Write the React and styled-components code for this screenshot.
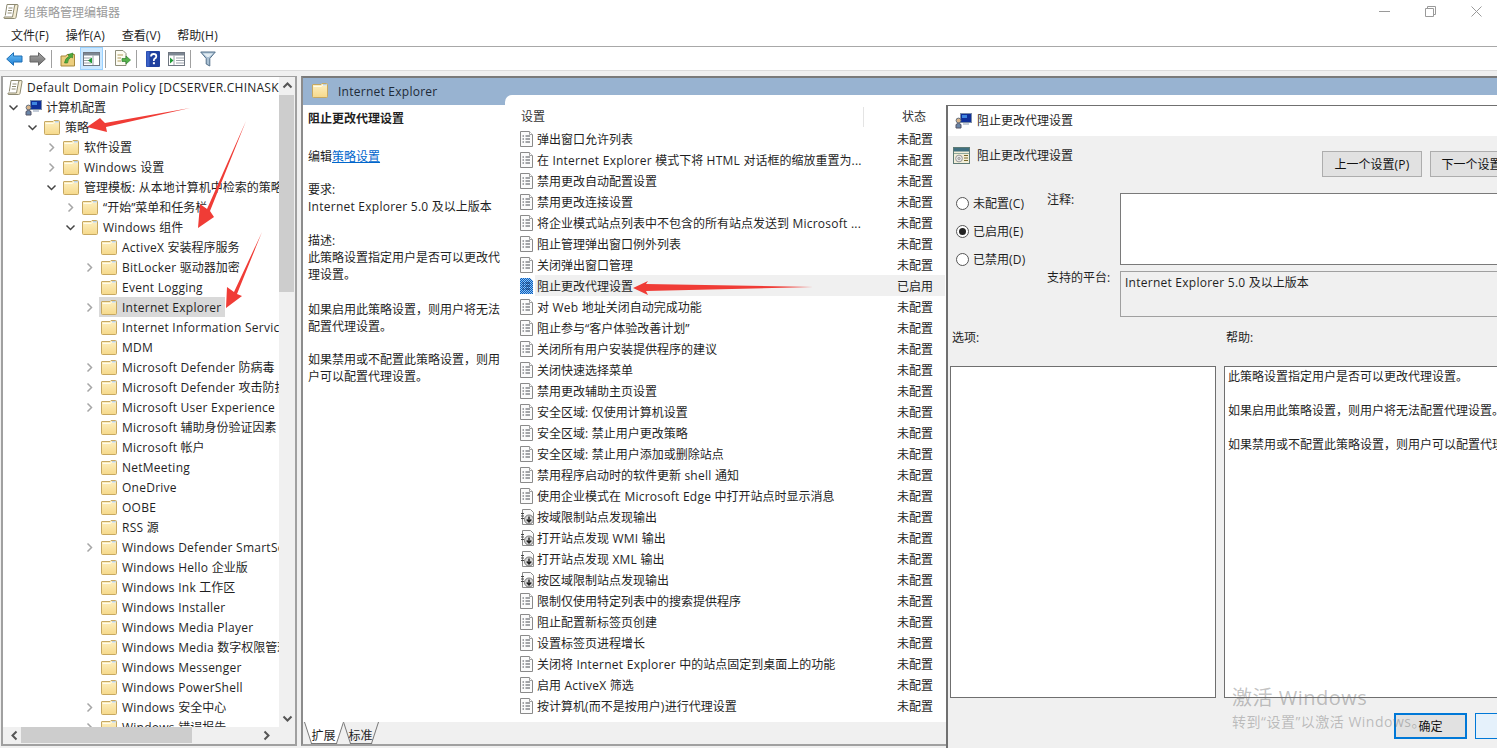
import React from 'react'
import styled, { createGlobalStyle } from 'styled-components'

const GlobalStyle = createGlobalStyle`
    html, body {
        margin: 0;
        padding: 0;
        background: #f0f0f0;
    }
    body {
        font-family: "Open Sans", "Noto Sans CJK SC", sans-serif;
        font-size: 12px;
        color: #1f1f1f;
    }
`

const Latin = styled.span`
    letter-spacing: 0.25px;
`

// Segoe UI runs a little wider than Open Sans, CJK stays at 12px
const Mixed = ({ children }) =>
    <>
        {children.split(/([A-Za-z0-9.()[\]: -]+)/).map((part, i) =>
            i % 2 ? <Latin key={i}>{part}</Latin> : part)}
    </>

const Window = styled.div`
    position: relative;
    width: 1497px;
    height: 748px;
    overflow: hidden;
    display: flex;
    flex-direction: column;
    background: #f0f0f0;
`

const TitleBar = styled.div`
    height: 23px;
    display: flex;
    align-items: center;
    padding-left: 3px;
    background: #fff;
    color: #9a9a9a;
    gap: 5px;
`
const TitleControls = styled.div`
    margin-left: auto;
    display: flex;
    gap: 35px;
    padding-right: 15px;
    align-items: center;
`
const MenuBar = styled.div`
    height: 24px;
    box-sizing: border-box;
    display: flex;
    align-items: center;
    gap: 16.6px;
    padding-left: 11px;
    background: #fff;
    border-bottom: 1px solid #a8a8a8;
`
const Toolbar = styled.div`
    height: 24px;
    box-sizing: border-box;
    display: flex;
    align-items: center;
    padding-left: 6px;
    background: #fff;
    border-bottom: 1px solid #dcdcdc;
`
const ToolButton = styled.div`
    width: ${({ w }) => w || 17}px;
    height: 23px;
    flex: none;
    margin-left: ${({ ml }) => ml || 0}px;
    display: flex;
    align-items: center;
    justify-content: center;
    box-sizing: border-box;
    ${({ pressed }) => pressed && 'background: #cce8ff; border: 1px solid #99d1ff;'}
`
const ToolSep = styled.div`
    width: 1px;
    height: 18px;
    flex: none;
    background: #a0a0a0;
    margin-left: ${({ ml }) => ml || 5}px;
`

const Workspace = styled.div`
    flex: 1;
    min-height: 0;
    display: flex;
    gap: 4px;
    padding: 5px 0 2px 1px;
`

const TreePanel = styled.div`
    width: 296px;
    box-sizing: border-box;
    border: 2px solid #a0a0a0;
    border-top-width: 1px;
    display: grid;
    grid-template-columns: 1fr 16px;
    grid-template-rows: 1fr 17px;
    background: #f0f0f0;
`
const Tree = styled.div`
    background: #fff;
    overflow: hidden;
    min-width: 0;
`
const TreeRow = styled.div`
    height: 20px;
    display: flex;
    align-items: center;
    white-space: nowrap;
    padding-left: ${({ depth }) => depth * 19 + 4}px;
`
const Twist = styled.span`
    width: 13px;
    height: 20px;
    flex: none;
    display: flex;
    align-items: center;
    justify-content: center;
    margin-right: 3px;
`
const TreeLabel = styled.span`
    display: flex;
    align-items: center;
    height: 20px;
    padding: 0 4px 0 ${({ root }) => (root ? 0 : 2)}px;
    gap: 4px;
    background: ${({ selected }) => (selected ? '#d9d9d9' : 'transparent')};
`
const VScroll = styled.div`
    display: flex;
    flex-direction: column;
    align-items: center;
    justify-content: space-between;
    padding: 3px 0;
    position: relative;
`
const VThumb = styled.div`
    position: absolute;
    top: 18px;
    left: 0;
    right: 1px;
    height: 197px;
    background: #cdcdcd;
`
const HScroll = styled.div`
    grid-column: 1 / span 2;
    position: relative;
    display: flex;
    align-items: center;
    justify-content: space-between;
    padding: 0 23px 0 6px;
`
const HThumb = styled.div`
    position: absolute;
    top: 0;
    bottom: 1px;
    left: 18px;
    width: 171px;
    background: #cdcdcd;
`

const DetailPanel = styled.div`
    flex: 1;
    min-width: 0;
    display: flex;
    flex-direction: column;
    border-left: 2px solid #8c8c8c;
    border-top: 2px solid #7a7a7a;
    border-bottom: 2px solid #a0a0a0;
`
const PaneHead = styled.div`
    height: 27px;
    box-sizing: border-box;
    flex: none;
    background: #98b3d1;
    display: flex;
    align-items: flex-start;
    padding: 5px 0 0 9px;
    gap: 9px;
    line-height: 17px;
    color: #1d2a38;
`
const PaneBody = styled.div`
    flex: 1;
    min-height: 0;
    display: flex;
    background: #fff;
`
const Description = styled.div`
    width: 202px;
    flex: none;
    box-sizing: border-box;
    padding: 5px 0 0 5px;
    line-height: 17px;
`
const DescTitle = styled.div`
    font-weight: 700;
    margin-bottom: 21px;
`
const DescBlock = styled.div`
    margin-bottom: ${({ gap }) => gap ?? 17}px;
    width: 196px;
`
const PolicyLink = styled.a`
    color: #0066cc;
    text-decoration: underline;
`
const PolicyList = styled.div`
    flex: 1;
    min-width: 0;
    margin-top: -10px;
    background: #fff;
    border-top-left-radius: 7px;
`
const ListHead = styled.div`
    height: 33px;
    display: grid;
    grid-template-columns: 359px 1fr;
    box-sizing: border-box;
    padding-top: 12px;
    color: #333;
`
const ColName = styled.span`
    padding-left: 16px;
    border-right: 1px solid #e4e4e4;
    height: 20px;
    line-height: 20px;
`
const ColState = styled.span`
    padding-left: 38px;
    line-height: 18px;
    margin-top: 1px;
`
const PolicyRow = styled.div`
    width: 440px;
    height: 21px;
    box-sizing: border-box;
    display: flex;
    align-items: center;
    padding-left: 15px;
    white-space: nowrap;
`
const IconSlot = styled.span`
    width: 13px;
    flex: none;
    display: flex;
    margin-right: 2px;
`
const RowBody = styled.div`
    flex: 1;
    height: 21px;
    display: grid;
    grid-template-columns: 360px 1fr;
    align-items: center;
    padding-left: 2px;
    background: ${({ active }) => (active ? '#f0f0f0' : 'transparent')};
`
const TabStrip = styled.div`
    height: 22px;
    flex: none;
    display: flex;
    background: #f0f0f0;
    padding-left: 1px;
`
const Tab = styled.div`
    position: relative;
    width: ${({ active }) => (active ? 39 : 35)}px;
    height: 22px;
    box-sizing: border-box;
    padding-top: 3px;
    display: flex;
    align-items: center;
    justify-content: center;
    z-index: ${({ active }) => (active ? 2 : 1)};
    &::before, &::after {
        content: "";
        position: absolute;
        top: 0;
        bottom: 0;
        width: 50%;
        border-bottom: 1px solid #777;
        background: ${({ active }) => (active ? '#fff' : '#f0f0f0')};
        z-index: -1;
    }
    &::before {
        left: 0;
        border-left: 1px solid #777;
        transform-origin: top left;
        transform: skewX(18deg);
    }
    &::after {
        right: 0;
        border-right: 1px solid #777;
        transform-origin: top right;
        transform: skewX(-18deg);
    }
`

const Dialog = styled.div`
    position: absolute;
    left: 946px;
    top: 105px;
    width: 551px;
    height: 643px;
    box-sizing: border-box;
    border-left: 2px solid #707070;
    border-top: 1px solid #707070;
    display: flex;
    flex-direction: column;
    background: #f0f0f0;
`
const DialogTitle = styled.div`
    height: 30px;
    flex: none;
    box-sizing: border-box;
    padding: 0 0 2px 7px;
    background: #fff;
    display: flex;
    align-items: center;
    gap: 5px;
`
const DialogHead = styled.div`
    height: 46px;
    flex: none;
    display: flex;
    padding: 11px 0 0 5px;
    gap: 7px;
    box-sizing: border-box;
    line-height: 17px;
    white-space: nowrap;
`
const DialogHeadText = styled.span`
    flex: none;
    width: 96px;
`
const NavButtons = styled.div`
    margin-left: 242px;
    margin-top: 4px;
    display: flex;
    flex: none;
    gap: 8px;
`
const Button = styled.div`
    width: ${({ w }) => w || 100}px;
    height: 26px;
    flex: none;
    box-sizing: border-box;
    background: #e1e1e1;
    border: 1px solid #adadad;
    display: flex;
    align-items: center;
    justify-content: center;
    color: #111;
`
const StateGrid = styled.div`
    height: 136px;
    flex: none;
    display: grid;
    grid-template-columns: 172px 1fr;
    margin-top: 11px;
`
const Radios = styled.div`
    display: flex;
    flex-direction: column;
    gap: 10px;
    padding: 1px 0 0 8px;
`
const RadioRow = styled.div`
    height: 18px;
    display: flex;
    align-items: center;
    gap: 4px;
`
const RadioDot = styled.span`
    width: 13px;
    height: 13px;
    box-sizing: border-box;
    border: 1px solid #555;
    border-radius: 50%;
    background: #fff;
    display: flex;
    align-items: center;
    justify-content: center;
    &::after {
        content: "";
        width: 7px;
        height: 7px;
        border-radius: 50%;
        background: ${({ checked }) => (checked ? '#222' : 'transparent')};
    }
`
const FieldGrid = styled.div`
    display: grid;
    grid-template-columns: 73px 1fr;
    grid-template-rows: 72px 46px;
    row-gap: 6px;
    margin-left: -73px;
`
const FieldLabel = styled.div`
    margin-top: -3px;
    padding-top: 2px;
    line-height: 16px;
`
const Memo = styled.div`
    background: #fff;
    border: 1px solid #7a7a7a;
    border-right: 0;
`
const Platform = styled.div`
    border: 1px solid #a0a0a0;
    border-right: 0;
    padding: 3px 0 0 4px;
    line-height: 16px;
`
const SectionLabels = styled.div`
    display: grid;
    grid-template-columns: 274px 1fr;
    padding: 1px 0 0 4px;
    height: 37px;
    flex: none;
    box-sizing: border-box;
    line-height: 16px;
`
const Boxes = styled.div`
    height: 332px;
    flex: none;
    display: grid;
    grid-template-columns: 266px 1fr;
    gap: 8px;
    padding-left: 2px;
`
const OptionBox = styled.div`
    background: #fff;
    border: 1px solid #6f6f6f;
`
const HelpBox = styled(OptionBox)`
    border-right: 0;
    padding: 1px 0 0 3px;
    line-height: 17px;
    white-space: nowrap;
    overflow: hidden;
`
const HelpLine = styled.div`
    margin-bottom: 17px;
`
const DialogFooter = styled.div`
    display: flex;
    gap: 8px;
    padding: 15px 0 0 446px;
`
const OkButton = styled(Button)`
    border: 2px solid #0078d7;
    background: #e1e1e1;
`
const CancelButton = styled(Button)`
    border: 1px solid #0078d7;
    background: #e5f1fb;
`

const Watermark = styled.div`
    position: absolute;
    left: 1232px;
    top: 685px;
    color: rgba(110, 110, 110, 0.42);
    pointer-events: none;
`
const WatermarkBig = styled.div`
    font-size: 20px;
    line-height: 26px;
    letter-spacing: 0.5px;
`
const WatermarkSmall = styled.div`
    font-size: 14px;
    line-height: 20px;
    margin-top: 1px;
    letter-spacing: 0.5px;
`
const ArrowLayer = styled.svg`
    position: absolute;
    left: 0;
    top: 0;
    pointer-events: none;
`

const Folder = () =>
    <svg width="17" height="15" viewBox="0 0 17 15">
        <defs>
            <linearGradient id="folderFill" x1="0" y1="0" x2="0" y2="1">
                <stop offset="0" stopColor="#fdf0c4" />
                <stop offset="1" stopColor="#f6d98a" />
            </linearGradient>
        </defs>
        <path d="M.5 2 Q.5 1.5 1 1.5 H9 L10 .5 H14.5 Q15.5 .5 15.5 1.5 V13.5 Q15.5 14.5 14.5 14.5 H1.5 Q.5 14.5 .5 13.5 Z" fill="url(#folderFill)" stroke="#c6a862" />
        <path d="M1.5 3.5 H9 L10.5 2.5 H14.5" stroke="#fffbe8" fill="none" />
        <path d="M11 1.2 H14.8 V2.4 H11 Z" fill="#a9c8e8" />
    </svg>

const Scroll = () =>
    <svg width="16" height="17" viewBox="0 0 16 17">
        <path d="M4 1.5 H14 Q15.5 1.5 15 3 L13 14.5 Q12.8 15.5 11.5 15.5 H2 Q.5 15.5 1 14 H9.5 L11.5 3 Q11.7 1.5 13 1.5" fill="#f4ecd2" stroke="#8e8a72" />
        <path d="M4 1.5 L2.3 12.5 M5.5 5 H9.5 M5 7.5 H9 M4.6 10 H8.6" stroke="#8e8a72" fill="none" />
    </svg>

const Computer = () =>
    <svg width="17" height="17" viewBox="0 0 17 17">
        <rect x="5.5" y="1.5" width="11" height="9" fill="#10309a" stroke="#7d8ea8" />
        <rect x="7" y="3" width="5" height="3" fill="#3f86e0" />
        <path d="M8 11 H14 V13 H8 Z" fill="#c4ccd8" />
        <circle cx="3.5" cy="8.5" r="2.4" fill="#d8b48a" stroke="#65707f" />
        <path d="M1 16 V12.5 Q3.5 10 6 12.5 V16 Z" fill="#6a86a8" stroke="#556" />
    </svg>

const Policy = () =>
    <svg width="13" height="16" viewBox="0 0 13 16">
        <path d="M.5 .5 H9.5 L12.5 3.5 V15.5 H.5 Z" fill="#fbfbfb" stroke="#8a8a8a" />
        <path d="M2.5 5 H4 M5.5 5 H10 M2.5 8 H4 M5.5 8 H10 M2.5 11 H4 M5.5 11 H10" stroke="#4b4e55" fill="none" />
        <path d="M9.5 .5 V3.5 H12.5" fill="#fff" stroke="#a0a0a0" />
    </svg>

const PolicySelected = () =>
    <svg width="13" height="16" viewBox="0 0 13 16">
        <defs>
            <pattern id="dither" width="2" height="2" patternUnits="userSpaceOnUse">
                <rect width="2" height="2" fill="#0a5fc0" />
                <rect width="1" height="1" fill="#8fc0ee" />
                <rect x="1" y="1" width="1" height="1" fill="#8fc0ee" />
            </pattern>
        </defs>
        <path d="M0 0 H10 L13 3 V16 H0 Z" fill="url(#dither)" />
        <path d="M2.5 5 H4 M5.5 5 H10 M2.5 8 H4 M5.5 8 H10 M2.5 11 H4 M5.5 11 H10" stroke="#0b2f66" fill="none" />
    </svg>

const PolicyDown = () =>
    <svg width="15" height="16" viewBox="0 0 15 16" style={{ flex: 'none' }}>
        <path d="M2.5 .5 H10.5 L13.5 3.5 V15.5 H2.5 Z" fill="#fbfbfb" stroke="#8a8a8a" />
        <path d="M1 4.5 H4 M1 7 H4 M1 9.5 H4" stroke="#444" />
        <circle cx="9" cy="10.5" r="4.5" fill="#d4d4d4" stroke="#777" />
        <path d="M9 7.5 V13 M6.7 10.5 L9 13 L11.3 10.5" stroke="#222" strokeWidth="1.4" fill="none" />
    </svg>

const Chevron = ({ open, color = '#a6a6a6' }) =>
    <svg width="11" height="11" viewBox="0 0 11 11">
        <path d={open ? 'M1.5 3.5 L5.5 7.5 L9.5 3.5' : 'M3.5 1.5 L7.5 5.5 L3.5 9.5'} stroke={open ? '#444' : color} strokeWidth="1.5" fill="none" />
    </svg>

const ScrollArrow = ({ d }) =>
    <svg width="11" height="11" viewBox="0 0 11 11">
        <path d={d} stroke="#555" strokeWidth="2" fill="none" />
    </svg>

const NavArrow = ({ back, id, from, to, stroke }) =>
    <svg width="17" height="14" viewBox="0 0 17 14">
        <defs>
            <linearGradient id={id} x1="0" y1="0" x2="0" y2="1">
                <stop offset="0" stopColor={from} />
                <stop offset="1" stopColor={to} />
            </linearGradient>
        </defs>
        <path d={back
            ? 'M.7 7 L7.5 .7 V4 H16 V10 H7.5 V13.3 Z'
            : 'M16.3 7 L9.5 .7 V4 H1 V10 H9.5 V13.3 Z'} fill={`url(#${id})`} stroke={stroke} strokeLinejoin="round" />
    </svg>

const UpFolder = () =>
    <svg width="16" height="16" viewBox="0 0 16 16">
        <path d="M1 5 H6 L7 3.5 H14.5 V15 H1 Z" fill="#ecce7e" stroke="#a88a3c" />
        <path d="M4.5 12 Q5 7 9 5.5 L8 3.5 L13 2 L12.5 7 L11 6 Q8 8 7.5 12 Z" fill="#4faa3c" stroke="#2f7a26" strokeWidth=".6" />
    </svg>

const PaneIcon = ({ arrow, left }) =>
    <svg width="17" height="14" viewBox="0 0 17 14">
        <rect x=".5" y=".5" width="16" height="13" fill="#fff" stroke="#6f7680" />
        <rect x="1" y="1" width="15" height="2.5" fill="#7d8793" />
        {left
            ? <path d="M10 3.5 V13 M1 6 H8 M1 8.5 H8 M1 11 H8" stroke="#9aa1aa" />
            : <path d="M6 3.5 V13 M8 6 H16 M8 8.5 H16 M8 11 H16" stroke="#9aa1aa" />}
        <path d={arrow} fill="#1f9a35" />
    </svg>

const ExportIcon = () =>
    <svg width="17" height="17" viewBox="0 0 17 17">
        <path d="M1.5 .5 H9 L12 3.5 V15.5 H1.5 Z" fill="#fdfcf2" stroke="#8d8d7a" />
        <path d="M3.5 5 H9 M3.5 8 H7 M3.5 11 H7" stroke="#b09a5a" />
        <path d="M8 8.5 H12 V6 L16.5 10 L12 14 V11.5 H8 Z" fill="#55b24a" stroke="#2e7f2e" strokeWidth=".7" />
    </svg>

const HelpIcon = () =>
    <svg width="14" height="16" viewBox="0 0 14 16">
        <rect width="14" height="16" rx="1" fill="#1f3f9e" />
        <rect x=".5" y=".5" width="3" height="15" fill="#3b62c8" />
        <path d="M5 5.5 Q5 3 7.6 3 Q10.3 3 10.3 5.2 Q10.3 6.8 8.7 7.6 Q7.8 8.2 7.8 10" stroke="#fff" strokeWidth="1.8" fill="none" />
        <rect x="6.9" y="11.2" width="2" height="2" fill="#fff" />
    </svg>

const FilterIcon = () =>
    <svg width="16" height="16" viewBox="0 0 16 16">
        <path d="M.7 1 H15.3 L9.8 7.5 V15 L6.2 13 V7.5 Z" fill="#a9c0d3" stroke="#54708a" />
        <path d="M3 2.5 H13 L9 6 H7 Z" fill="#e3edf4" />
    </svg>

const DialogIcon = () =>
    <svg width="17" height="17" viewBox="0 0 17 17" style={{ flex: 'none' }}>
        <rect x=".5" y=".5" width="16" height="16" fill="#f2eed8" stroke="#5d7a74" />
        <rect x="1" y="1" width="15" height="3.5" fill="#3f6f7f" />
        <rect x="1" y="6" width="15" height="1" fill="#8fa89a" />
        <circle cx="6" cy="11.5" r="3.4" fill="#e6e6e6" stroke="#999" />
        <circle cx="6" cy="11.5" r="1" fill="#fff" stroke="#888" />
        <path d="M11 8.5 H15 M11 11 H15 M11 13.5 H15" stroke="#7a6a2a" />
    </svg>

const WindowIcons = () =>
    <TitleControls>
        <svg width="11" height="11" viewBox="0 0 11 11"><path d="M0 5.5 H11" stroke="#9a9a9a" /></svg>
        <svg width="11" height="11" viewBox="0 0 11 11"><path d="M.5 2.5 H8.5 V10.5 H.5 Z M2.5 2.5 V.5 H10.5 V8.5 H8.5" stroke="#9a9a9a" fill="none" /></svg>
        <svg width="11" height="11" viewBox="0 0 11 11"><path d="M.5 .5 L10.5 10.5 M10.5 .5 L.5 10.5" stroke="#9a9a9a" fill="none" /></svg>
    </TitleControls>

const Arrows = () =>
    <ArrowLayer width="1497" height="748" viewBox="0 0 1497 748">
        <g fill="#f03c36">
            <polygon points="190,108 105,123 100,118 87,127 107,132 106,127" />
            <polygon points="246,121 207,209 200,204 198,228 214,217 210,211" />
            <polygon points="262,232 234,292 227,287 226,308 242,296 237,294" />
            <polygon points="813,287 646,284 648,281 633,288 648,295 646,291" />
        </g>
    </ArrowLayer>

// depth, label, twist: 'open' | 'closed' | undefined, selected
const treeRows = [
    [1, '策略', 'open'],
    [2, '软件设置', 'closed'],
    [2, 'Windows 设置', 'closed'],
    [2, '管理模板: 从本地计算机中检索的策略', 'open'],
    [3, '“开始”菜单和任务栏', 'closed'],
    [3, 'Windows 组件', 'open'],
    [4, 'ActiveX 安装程序服务'],
    [4, 'BitLocker 驱动器加密', 'closed'],
    [4, 'Event Logging'],
    [4, 'Internet Explorer', 'closed', true],
    [4, 'Internet Information Services'],
    [4, 'MDM'],
    [4, 'Microsoft Defender 防病毒', 'closed'],
    [4, 'Microsoft Defender 攻击防护', 'closed'],
    [4, 'Microsoft User Experience', 'closed'],
    [4, 'Microsoft 辅助身份验证因素'],
    [4, 'Microsoft 帐户'],
    [4, 'NetMeeting'],
    [4, 'OneDrive'],
    [4, 'OOBE'],
    [4, 'RSS 源'],
    [4, 'Windows Defender SmartScreen', 'closed'],
    [4, 'Windows Hello 企业版'],
    [4, 'Windows Ink 工作区'],
    [4, 'Windows Installer'],
    [4, 'Windows Media Player'],
    [4, 'Windows Media 数字权限管理'],
    [4, 'Windows Messenger'],
    [4, 'Windows PowerShell'],
    [4, 'Windows 安全中心', 'closed'],
    [4, 'Windows 错误报告', 'closed'],
]

const policies = [
    '弹出窗口允许列表',
    '在 Internet Explorer 模式下将 HTML 对话框的缩放重置为...',
    '禁用更改自动配置设置',
    '禁用更改连接设置',
    '将企业模式站点列表中不包含的所有站点发送到 Microsoft ...',
    '阻止管理弹出窗口例外列表',
    '关闭弹出窗口管理',
    '阻止更改代理设置',
    '对 Web 地址关闭自动完成功能',
    '阻止参与“客户体验改善计划”',
    '关闭所有用户安装提供程序的建议',
    '关闭快速选择菜单',
    '禁用更改辅助主页设置',
    '安全区域: 仅使用计算机设置',
    '安全区域: 禁止用户更改策略',
    '安全区域: 禁止用户添加或删除站点',
    '禁用程序启动时的软件更新 shell 通知',
    '使用企业模式在 Microsoft Edge 中打开站点时显示消息',
    '按域限制站点发现输出',
    '打开站点发现 WMI 输出',
    '打开站点发现 XML 输出',
    '按区域限制站点发现输出',
    '限制仅使用特定列表中的搜索提供程序',
    '阻止配置新标签页创建',
    '设置标签页进程增长',
    '关闭将 Internet Explorer 中的站点固定到桌面上的功能',
    '启用 ActiveX 筛选',
    '按计算机(而不是按用户)进行代理设置',
]

const PolicyIcon = ({ index }) => {
    if (index >= 18 && index <= 21) return <PolicyDown />
    return index === 7 ? <PolicySelected /> : <Policy />
}

const App = () =>
    <Window>
        <GlobalStyle />
        <TitleBar>
            <Scroll />
            组策略管理编辑器
            <WindowIcons />
        </TitleBar>
        <MenuBar>
            <span><Mixed>文件(F)</Mixed></span>
            <span><Mixed>操作(A)</Mixed></span>
            <span><Mixed>查看(V)</Mixed></span>
            <span><Mixed>帮助(H)</Mixed></span>
        </MenuBar>
        <Toolbar>
            <ToolButton><NavArrow back id="navBack" from="#6cc0f5" to="#1f7fd6" stroke="#1f6fb5" /></ToolButton>
            <ToolButton ml={6}><NavArrow id="navFwd" from="#a8a8a8" to="#6f6f6f" stroke="#666" /></ToolButton>
            <ToolSep />
            <ToolButton ml={8} w={16}><UpFolder /></ToolButton>
            <ToolButton ml={4} w={23} pressed><PaneIcon left arrow="M5 8.5 L9 5.5 V11.5 Z" /></ToolButton>
            <ToolSep ml={2} />
            <ToolButton ml={8}><ExportIcon /></ToolButton>
            <ToolSep />
            <ToolButton ml={9} w={14}><HelpIcon /></ToolButton>
            <ToolButton ml={8}><PaneIcon arrow="M2 5.5 L5.5 8.5 L2 11.5 Z" /></ToolButton>
            <ToolSep />
            <ToolButton ml={9} w={16}><FilterIcon /></ToolButton>
        </Toolbar>
        <Workspace>
            <TreePanel>
                <Tree>
                    <TreeRow depth={0}>
                        <TreeLabel root><Scroll /><span><Mixed>Default Domain Policy [DCSERVER.CHINASK</Mixed></span></TreeLabel>
                    </TreeRow>
                    <TreeRow depth={0}>
                        <Twist><Chevron open /></Twist>
                        <TreeLabel><Computer />计算机配置</TreeLabel>
                    </TreeRow>
                    {treeRows.map(([depth, label, twist, selected]) =>
                        <TreeRow depth={depth} key={label}>
                            <Twist>{twist && <Chevron open={twist === 'open'} />}</Twist>
                            <TreeLabel selected={selected}><Folder /><span><Mixed>{label}</Mixed></span></TreeLabel>
                        </TreeRow>)}
                </Tree>
                <VScroll>
                    <VThumb />
                    <ScrollArrow d="M1.5 7.5 L5.5 3.5 L9.5 7.5" />
                    <ScrollArrow d="M1.5 3.5 L5.5 7.5 L9.5 3.5" />
                </VScroll>
                <HScroll>
                    <HThumb />
                    <ScrollArrow d="M7.5 1.5 L3.5 5.5 L7.5 9.5" />
                    <ScrollArrow d="M3.5 1.5 L7.5 5.5 L3.5 9.5" />
                </HScroll>
            </TreePanel>
            <DetailPanel>
                <PaneHead><Folder /><span><Mixed>Internet Explorer</Mixed></span></PaneHead>
                <PaneBody>
                    <Description>
                        <DescTitle>阻止更改代理设置</DescTitle>
                        <DescBlock gap={16}>编辑<PolicyLink>策略设置</PolicyLink></DescBlock>
                        <DescBlock gap={17}>要求:<br /><Mixed>Internet Explorer 5.0 及以上版本</Mixed></DescBlock>
                        <DescBlock gap={18}>描述:<br />此策略设置指定用户是否可以更改代理设置。</DescBlock>
                        <DescBlock gap={16}>如果启用此策略设置，则用户将无法配置代理设置。</DescBlock>
                        <DescBlock>如果禁用或不配置此策略设置，则用户可以配置代理设置。</DescBlock>
                    </Description>
                    <PolicyList>
                        <ListHead>
                            <ColName>设置</ColName>
                            <ColState>状态</ColState>
                        </ListHead>
                        {policies.map((name, i) =>
                            <PolicyRow key={name}>
                                <IconSlot><PolicyIcon index={i} /></IconSlot>
                                <RowBody active={i === 7}>
                                    <span><Mixed>{name}</Mixed></span>
                                    <span>{i === 7 ? '已启用' : '未配置'}</span>
                                </RowBody>
                            </PolicyRow>)}
                    </PolicyList>
                </PaneBody>
                <TabStrip>
                    <Tab active>扩展</Tab>
                    <Tab>标准</Tab>
                </TabStrip>
            </DetailPanel>
        </Workspace>
        <Dialog>
            <DialogTitle><Computer />阻止更改代理设置</DialogTitle>
            <DialogHead>
                <DialogIcon />
                <DialogHeadText>阻止更改代理设置</DialogHeadText>
                <NavButtons>
                    <Button><span><Mixed>上一个设置(P)</Mixed></span></Button>
                    <Button><span><Mixed>下一个设置(N)</Mixed></span></Button>
                </NavButtons>
            </DialogHead>
            <StateGrid>
                <Radios>
                    <RadioRow><RadioDot /><span><Mixed>未配置(C)</Mixed></span></RadioRow>
                    <RadioRow><RadioDot checked /><span><Mixed>已启用(E)</Mixed></span></RadioRow>
                    <RadioRow><RadioDot /><span><Mixed>已禁用(D)</Mixed></span></RadioRow>
                </Radios>
                <FieldGrid>
                    <FieldLabel>注释:</FieldLabel>
                    <Memo />
                    <FieldLabel>支持的平台:</FieldLabel>
                    <Platform><Mixed>Internet Explorer 5.0 及以上版本</Mixed></Platform>
                </FieldGrid>
            </StateGrid>
            <SectionLabels>
                <span>选项:</span>
                <span>帮助:</span>
            </SectionLabels>
            <Boxes>
                <OptionBox />
                <HelpBox>
                    <HelpLine>此策略设置指定用户是否可以更改代理设置。</HelpLine>
                    <HelpLine>如果启用此策略设置，则用户将无法配置代理设置。</HelpLine>
                    <HelpLine>如果禁用或不配置此策略设置，则用户可以配置代理设置。</HelpLine>
                </HelpBox>
            </Boxes>
            <DialogFooter>
                <OkButton w={73}>确定</OkButton>
                <CancelButton w={73}>取消</CancelButton>
            </DialogFooter>
        </Dialog>
        <Watermark>
            <WatermarkBig>激活 Windows</WatermarkBig>
            <WatermarkSmall>转到“设置”以激活 Windows。</WatermarkSmall>
        </Watermark>
        <Arrows />
    </Window>

export default App
